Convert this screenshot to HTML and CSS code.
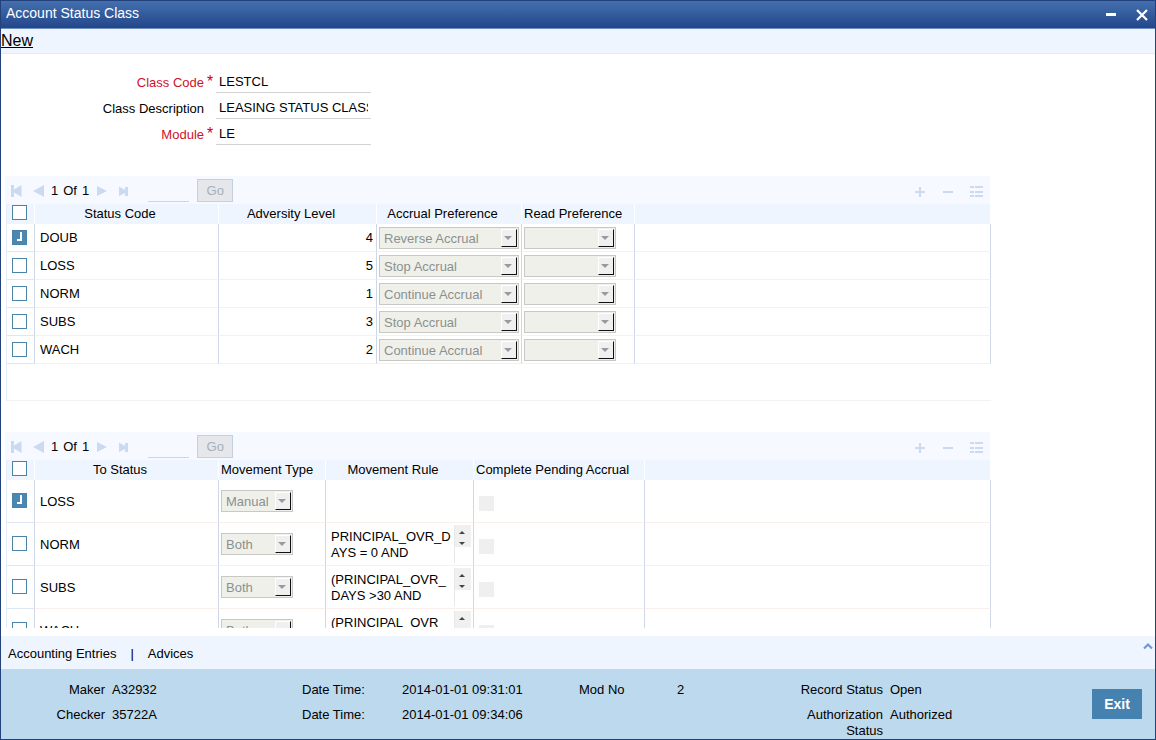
FILE: index.html
```html
<!DOCTYPE html>
<html lang="en">
<head>
  <meta charset="UTF-8" />
  <meta name="viewport" content="width=device-width,initial-scale=1.0" />
  <title>Account Status Class</title>
  <link rel="stylesheet" href="styles.css">
</head>
<body>
  <svg class="sprite" aria-hidden="true">
    <symbol id="i-first" viewBox="0 0 11 12"><path d="M0 0h3v4.500L10.500 0v12L3 7.500V12H0z" /></symbol>
    <symbol id="i-prev" viewBox="0 0 11 12"><path d="M11 0v12L0 6z" /></symbol>
    <symbol id="i-next" viewBox="0 0 11 12"><path d="M0 1v10l10-5z" /></symbol>
    <symbol id="i-last" viewBox="0 0 11 12"><path d="M0 1.500l6 3.500V2h3v9H6V8L0 11z" /></symbol>
    <symbol id="i-plus" viewBox="0 0 14 14"><path d="M6 2h2v4h4v2H8v4H6V8H2V6h4z" /></symbol>
    <symbol id="i-minus" viewBox="0 0 14 14"><path d="M2 6h10v2H2z" /></symbol>
    <symbol id="i-list" viewBox="0 0 14 14"><path d="M1 1h4v2H1zM6 1h8v2H6zM1 6h4v2H1zM6 6h8v2H6zM1 10h4v2H1zM6 10h8v2H6z" /></symbol>
  </svg>

  <div class="window">
    <header class="titlebar">
      <h1>Account Status Class</h1>
      <button type="button" aria-label="Minimize">
        <svg width="12" height="12" viewBox="0 0 12 12"><path d="M1 4h10v3H1z" fill="#fff" /></svg>
      </button>
      <button type="button" aria-label="Close">
        <svg width="12" height="12" viewBox="0 0 12 12"><path d="M1 1l10 10M11 1L1 11" stroke="#fff" stroke-width="2.200" /></svg>
      </button>
    </header>

    <nav class="toolbar"><a href="#">New</a></nav>

    <main class="content">
      <form class="fields">
        <div class="field required">
          <label for="classCode">Class Code</label>
          <span class="star">*</span>
          <input id="classCode" type="text" value="LESTCL" readonly />
        </div>
        <div class="field">
          <label for="classDesc">Class Description</label>
          <span class="star"></span>
          <input id="classDesc" type="text" value="LEASING STATUS CLASS" readonly />
        </div>
        <div class="field required">
          <label for="module">Module</label>
          <span class="star">*</span>
          <input id="module" type="text" value="LE" readonly />
        </div>
      </form>

      <section class="grid">
        <div class="pager">
          <button type="button" aria-label="First page"><svg><use href="#i-first" /></svg></button>
          <button type="button" aria-label="Previous page"><svg><use href="#i-prev" /></svg></button>
          <span class="pages"><span>1</span><span>Of</span><span>1</span></span>
          <button type="button" aria-label="Next page"><svg><use href="#i-next" /></svg></button>
          <button type="button" aria-label="Last page"><svg><use href="#i-last" /></svg></button>
          <input class="goto" type="text" aria-label="Page number" />
          <button class="go" type="button" disabled>Go</button>
          <span class="tools">
            <button type="button" aria-label="Add row"><svg><use href="#i-plus" /></svg></button>
            <button type="button" aria-label="Delete row"><svg><use href="#i-minus" /></svg></button>
            <button type="button" aria-label="Single view"><svg><use href="#i-list" /></svg></button>
          </span>
        </div>
        <div class="grid-body">
          <table>
            <colgroup>
              <col class="c-check"><col class="c-status"><col class="c-level"><col class="c-accrual"><col class="c-read"><col>
            </colgroup>
            <thead>
              <tr>
                <th><input type="checkbox" aria-label="Select all" /></th>
                <th>Status Code</th>
                <th>Adversity Level</th>
                <th>Accrual Preference</th>
                <th class="tight">Read Preference</th>
                <th></th>
              </tr>
            </thead>
            <tbody>
              <tr>
                <td><input type="checkbox" aria-label="Select DOUB" checked /></td>
                <td>DOUB</td>
                <td class="num">4</td>
                <td class="ctl"><span class="select wide"><select aria-label="Accrual Preference" disabled><option>Reverse Accrual</option></select></span></td>
                <td class="ctl"><span class="select mid"><select aria-label="Read Preference" disabled><option></option></select></span></td>
                <td></td>
              </tr>
              <tr>
                <td><input type="checkbox" aria-label="Select LOSS" /></td>
                <td>LOSS</td>
                <td class="num">5</td>
                <td class="ctl"><span class="select wide"><select aria-label="Accrual Preference" disabled><option>Stop Accrual</option></select></span></td>
                <td class="ctl"><span class="select mid"><select aria-label="Read Preference" disabled><option></option></select></span></td>
                <td></td>
              </tr>
              <tr>
                <td><input type="checkbox" aria-label="Select NORM" /></td>
                <td>NORM</td>
                <td class="num">1</td>
                <td class="ctl"><span class="select wide"><select aria-label="Accrual Preference" disabled><option>Continue Accrual</option></select></span></td>
                <td class="ctl"><span class="select mid"><select aria-label="Read Preference" disabled><option></option></select></span></td>
                <td></td>
              </tr>
              <tr>
                <td><input type="checkbox" aria-label="Select SUBS" /></td>
                <td>SUBS</td>
                <td class="num">3</td>
                <td class="ctl"><span class="select wide"><select aria-label="Accrual Preference" disabled><option>Stop Accrual</option></select></span></td>
                <td class="ctl"><span class="select mid"><select aria-label="Read Preference" disabled><option></option></select></span></td>
                <td></td>
              </tr>
              <tr>
                <td><input type="checkbox" aria-label="Select WACH" /></td>
                <td>WACH</td>
                <td class="num">2</td>
                <td class="ctl"><span class="select wide"><select aria-label="Accrual Preference" disabled><option>Continue Accrual</option></select></span></td>
                <td class="ctl"><span class="select mid"><select aria-label="Read Preference" disabled><option></option></select></span></td>
                <td></td>
              </tr>
            </tbody>
          </table>
        </div>
      </section>

      <section class="grid tall">
        <div class="pager">
          <button type="button" aria-label="First page"><svg><use href="#i-first" /></svg></button>
          <button type="button" aria-label="Previous page"><svg><use href="#i-prev" /></svg></button>
          <span class="pages"><span>1</span><span>Of</span><span>1</span></span>
          <button type="button" aria-label="Next page"><svg><use href="#i-next" /></svg></button>
          <button type="button" aria-label="Last page"><svg><use href="#i-last" /></svg></button>
          <input class="goto" type="text" aria-label="Page number" />
          <button class="go" type="button" disabled>Go</button>
          <span class="tools">
            <button type="button" aria-label="Add row"><svg><use href="#i-plus" /></svg></button>
            <button type="button" aria-label="Delete row"><svg><use href="#i-minus" /></svg></button>
            <button type="button" aria-label="Single view"><svg><use href="#i-list" /></svg></button>
          </span>
        </div>
        <div class="grid-body">
          <table>
            <colgroup>
              <col class="c-check"><col class="c-status"><col class="c-type"><col class="c-rule"><col class="c-pending"><col>
            </colgroup>
            <thead>
              <tr>
                <th><input type="checkbox" aria-label="Select all" /></th>
                <th>To Status</th>
                <th class="tight">Movement Type</th>
                <th>Movement Rule</th>
                <th class="tight">Complete Pending Accrual</th>
                <th></th>
              </tr>
            </thead>
            <tbody>
              <tr>
                <td><input type="checkbox" aria-label="Select LOSS" checked /></td>
                <td>LOSS</td>
                <td class="ctl"><span class="select small"><select aria-label="Movement Type" disabled><option>Manual</option></select></span></td>
                <td></td>
                <td><input type="checkbox" aria-label="Complete Pending Accrual" disabled /></td>
                <td></td>
              </tr>
              <tr>
                <td><input type="checkbox" aria-label="Select NORM" /></td>
                <td>NORM</td>
                <td class="ctl"><span class="select small"><select aria-label="Movement Type" disabled><option>Both</option></select></span></td>
                <td class="ctl">
                  <div class="rule">
                    <textarea rows="2" aria-label="Movement Rule" readonly>PRINCIPAL_OVR_DAYS = 0 AND</textarea>
                    <span class="spin"><button type="button" aria-label="Scroll up"></button><button type="button" class="down" aria-label="Scroll down"></button></span>
                  </div>
                </td>
                <td><input type="checkbox" aria-label="Complete Pending Accrual" disabled /></td>
                <td></td>
              </tr>
              <tr>
                <td><input type="checkbox" aria-label="Select SUBS" /></td>
                <td>SUBS</td>
                <td class="ctl"><span class="select small"><select aria-label="Movement Type" disabled><option>Both</option></select></span></td>
                <td class="ctl">
                  <div class="rule">
                    <textarea rows="2" aria-label="Movement Rule" readonly>(PRINCIPAL_OVR_DAYS &gt;30 AND</textarea>
                    <span class="spin"><button type="button" aria-label="Scroll up"></button><button type="button" class="down" aria-label="Scroll down"></button></span>
                  </div>
                </td>
                <td><input type="checkbox" aria-label="Complete Pending Accrual" disabled /></td>
                <td></td>
              </tr>
              <tr>
                <td><input type="checkbox" aria-label="Select WACH" /></td>
                <td>WACH</td>
                <td class="ctl"><span class="select small"><select aria-label="Movement Type" disabled><option>Both</option></select></span></td>
                <td class="ctl">
                  <div class="rule">
                    <textarea rows="2" aria-label="Movement Rule" readonly>(PRINCIPAL_OVR_</textarea>
                    <span class="spin"><button type="button" aria-label="Scroll up"></button><button type="button" class="down" aria-label="Scroll down"></button></span>
                  </div>
                </td>
                <td><input type="checkbox" aria-label="Complete Pending Accrual" disabled /></td>
                <td></td>
              </tr>
            </tbody>
          </table>
        </div>
      </section>
    </main>

    <nav class="links">
      <a href="#">Accounting Entries</a>
      <span>|</span>
      <a href="#">Advices</a>
      <button type="button" aria-label="Collapse">
        <svg width="10" height="8" viewBox="0 0 10 8"><path d="M1 6.500L5 2.500l4 4" fill="none" stroke="#7398d0" stroke-width="2.200" /></svg>
      </button>
    </nav>

    <footer class="audit">
      <dl>
        <dt class="right">Maker</dt><dd>A32932</dd>
        <dt>Date Time:</dt><dd>2014-01-01 09:31:01</dd>
        <dt>Mod No</dt><dd>2</dd>
        <dt class="right">Record Status</dt><dd>Open</dd>
        <dt class="right">Checker</dt><dd>35722A</dd>
        <dt>Date Time:</dt><dd class="span">2014-01-01 09:34:06</dd>
        <dt class="right">Authorization Status</dt><dd>Authorized</dd>
      </dl>
      <button class="exit" type="button">Exit</button>
    </footer>
  </div>
</body>
</html>
```

FILE: styles.css
```css
* {
  box-sizing: border-box;
}

body {
  margin: 0;
  background: #fff;
  color: #000;
  font: 13px/16px "Liberation Sans", Arial, sans-serif;
}

input,
select,
textarea,
button {
  margin: 0;
  padding: 0;
  border: 0;
  border-radius: 0;
  background: none;
  color: inherit;
  font: inherit;
}

button {
  cursor: pointer;
}

svg {
  display: block;
}

a {
  color: inherit;
  text-decoration: none;
}

.sprite {
  display: none;
}

.window {
  display: flex;
  flex-direction: column;
  height: 100vh;
  border: 1px solid #23417b;
}

/* title bar */
.titlebar {
  display: flex;
  align-items: center;
  gap: 19px;
  height: 28px;
  padding: 0 7px 0 5px;
  border-bottom: 1px solid #6f8fc0;
  background: linear-gradient(#4470ae, #23468a);
  flex-shrink: 0;
}

.titlebar h1 {
  flex: 1;
  margin: 0;
  padding-bottom: 4px;
  color: #fff;
  font-size: 14px;
  font-weight: normal;
}

.toolbar {
  height: 25px;
  padding-top: 2px;
  border-bottom: 1px solid #e6e9ee;
  background: #eef5ff;
  font-size: 16px;
  line-height: 19px;
  flex-shrink: 0;
}

.toolbar a {
  text-decoration: underline;
}

.content {
  flex: 1;
  min-height: 0;
  margin-bottom: 8px;
  padding: 13px 164px 0 4px;
  overflow-y: auto;
  scrollbar-width: none;
}

/* header fields */
.field {
  display: flex;
  height: 26px;
}

.field label {
  width: 199px;
  padding-top: 8px;
  text-align: right;
}

.field .star {
  width: 12px;
  padding: 7px 0 0 3px;
  font-size: 16px;
}

.field input {
  width: 155px;
  padding: 5px 3px 0;
  border-bottom: 1px solid #d2d2d2;
}

.required label {
  color: #d0112b;
}

.required .star {
  color: #d00000;
}

/* grids */
.grid {
  margin-top: 31px;
}

.pager {
  display: flex;
  align-items: center;
  height: 28px;
  margin-right: 1px;
  padding: 2px 7px 0 6px;
  background: #f6f9ff;
}

.pager svg {
  width: 11px;
  height: 12px;
  fill: #cbdaf1;
}

.pager > button {
  margin-right: 11px;
}

.pages {
  display: flex;
  gap: 5px;
  margin: 0 8px 0 -4px;
}

.goto {
  align-self: flex-start;
  width: 41px;
  height: 24px;
  margin: 0 8px 0 7px;
  border-bottom: 1px solid #d0d6de;
}

.pager .go {
  align-self: flex-start;
  width: 36px;
  height: 23px;
  margin: 1px 0 0;
  padding-top: 1px;
  border: 1px solid #c5d0de;
  background: #e5e7ea;
  color: #a8afba;
}

.tools {
  display: flex;
  gap: 14px;
  margin-left: auto;
  padding-top: 2px;
}

.tools svg {
  width: 14px;
  height: 14px;
}

.grid-body {
  min-height: 197px;
  margin-left: 1px;
  border-left: 1px solid #e6ebf5;
  border-bottom: 1px solid #f2f2f6;
}

table {
  width: 100%;
  border-collapse: separate;
  border-spacing: 0;
  table-layout: fixed;
}

.c-check { width: 28px; }
.c-status { width: 184px; }
.c-level { width: 158px; }
.c-accrual { width: 145px; }
.c-read { width: 113px; }
.c-type { width: 107px; }
.c-rule { width: 148px; }
.c-pending { width: 171px; }

th {
  height: 20px;
  padding: 0 13px 0 0;
  border-right: 1px solid #fff;
  background: #eef5ff;
  font-weight: normal;
  white-space: nowrap;
}

th.tight {
  padding: 0 0 0 2px;
  text-align: left;
}

th:first-child {
  padding: 0 0 3px 5px;
}

td {
  height: 28px;
  padding: 0 5px;
  border-right: 1px solid #cfd8e6;
  border-bottom: 1px solid #faefec;
}

td:first-child {
  border-bottom-color: #dfe6f3;
}

td.num {
  padding-right: 3px;
  text-align: right;
}

td.ctl {
  padding: 0 2px;
}

.tall td {
  height: 43px;
}

.tall td:first-child {
  padding-bottom: 2px;
}

.tall td:nth-child(2) {
  padding-top: 1px;
}

input[type="checkbox"] {
  display: block;
  appearance: none;
  width: 15px;
  height: 15px;
  border: 1px solid #4a83a8;
  background: #fff;
}

input[type="checkbox"]:checked {
  padding: 1px 0 0 4px;
  background: #4c87b3;
}

input[type="checkbox"]:checked::after {
  content: "";
  display: block;
  width: 3px;
  height: 7px;
  border: solid #fff;
  border-width: 0 2px 2px 0;
}

input[type="checkbox"]:disabled {
  margin-top: 4px;
  border-color: #efefef;
  background: #efefef;
}

.select {
  display: block;
  position: relative;
}

.select.wide { width: 140px; }
.select.mid { width: 92px; }
.select.small { width: 72px; }

.select select {
  display: block;
  appearance: none;
  width: 100%;
  height: 22px;
  padding: 2px 20px 0 4px;
  border: 1px solid #c8c9c4;
  background: #f0f0ea;
  color: #8a908f;
  opacity: 1;
}

/* drop-down button drawn over the right end of the select */
.select::before {
  content: "";
  position: absolute;
  top: 2px;
  right: 2px;
  width: 14px;
  height: 16px;
  border: 1px solid #fff;
  border-right-color: #111;
  border-bottom-color: #111;
  background: #f0f0f0;
  pointer-events: none;
}

.select::after {
  content: "";
  position: absolute;
  top: 9px;
  right: 7px;
  border: 4px solid transparent;
  border-top-color: #9a9a9a;
  border-bottom: 0;
  pointer-events: none;
}

.rule {
  display: flex;
  height: 38px;
}

.rule textarea {
  width: 127px;
  padding: 4px 0 0 3px;
  overflow: hidden;
  resize: none;
  word-break: break-all;
}

.spin {
  width: 17px;
  border-left: 1px solid #e8e8e8;
}

.spin button {
  display: block;
  width: 16px;
  height: 11px;
  padding: 3px 4px 0;
  background: #f0f0f0;
}

.spin button::after {
  content: "";
  display: block;
  width: 0;
  border: 3px solid transparent;
  border-top: 0;
  border-bottom-color: #444;
}

.spin .down::after {
  border-top: 3px solid #444;
  border-bottom: 0;
}

/* bottom links */
.links {
  display: flex;
  gap: 14px;
  height: 33px;
  padding: 10px 2px 0 7px;
  background: #eef5ff;
  flex-shrink: 0;
}

.links button {
  align-self: flex-start;
  margin: -4px 0 0 auto;
}

/* audit footer */
.audit {
  display: flex;
  align-items: flex-start;
  gap: 7px;
  height: 70px;
  padding: 13px 13px 0 0;
  background: #bcd9ed;
  flex-shrink: 0;
}

.audit dl {
  display: grid;
  flex: 1;
  grid-template-columns: 104fr 183fr 93fr 170fr 91fr 107fr 92fr 195fr;
  gap: 9px 7px;
  margin: 0;
}

.audit dd {
  margin: 0;
}

.audit .right {
  text-align: right;
}

.audit .span {
  grid-column: span 3;
}

.exit {
  width: 50px;
  height: 30px;
  margin-top: 7px;
  background: #4682af;
  color: #fff;
  font-size: 14px;
  font-weight: bold;
}
```
